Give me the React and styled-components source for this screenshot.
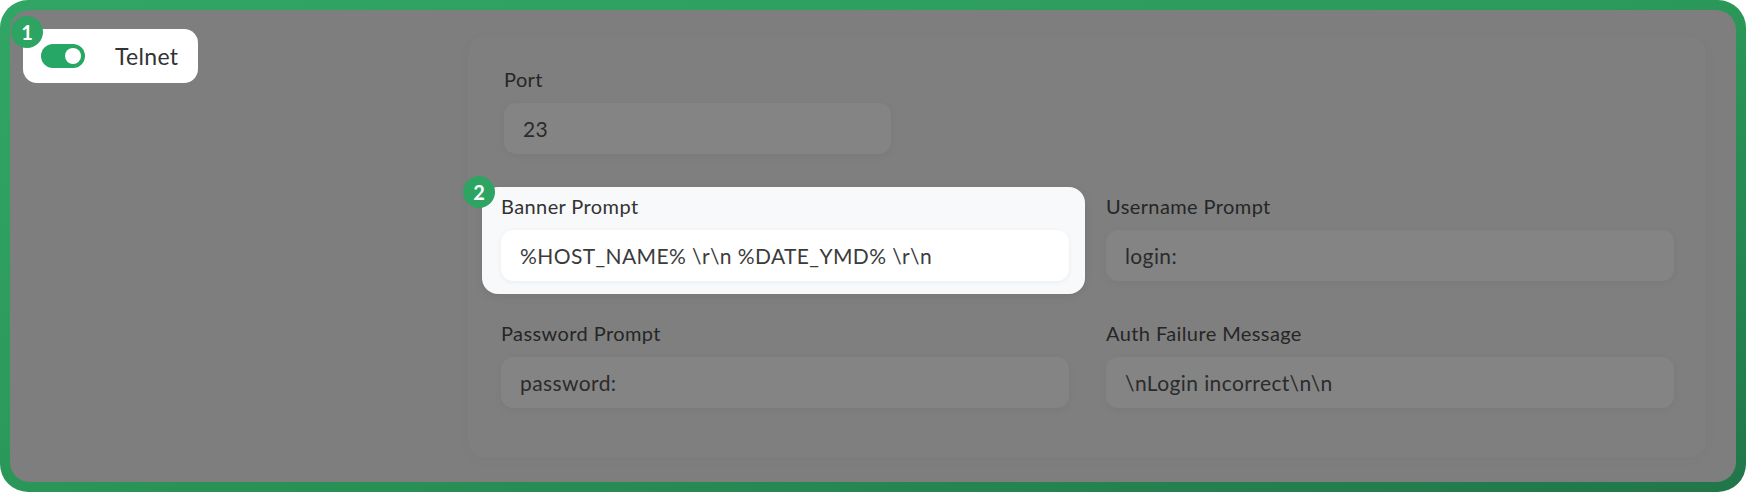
import React from 'react';
import styled, { createGlobalStyle } from 'styled-components';

const GlobalStyle = createGlobalStyle`
  html, body {
    margin: 0;
    padding: 0;
    background: #ffffff;
  }
  body {
    font-family: Lato, "Open Sans", "Liberation Sans", sans-serif;
  }
`;

const fields = [
  { label: 'Port', value: '23', half: true },
  { label: 'Banner Prompt', value: '%HOST_NAME% \\r\\n %DATE_YMD% \\r\\n', badge: 2 },
  { label: 'Username Prompt', value: 'login:' },
  { label: 'Password Prompt', value: 'password:' },
  { label: 'Auth Failure Message', value: '\\nLogin incorrect\\n\\n' },
];

const Frame = styled.div`
  width: 1746px;
  height: 492px;
  box-sizing: border-box;
  padding: 10px;
  border-radius: 28px;
  background: linear-gradient(165deg, #31a664 0%, #2b9a5a 45%, #21764a 100%);
`;

const Stage = styled.div`
  height: 100%;
  box-sizing: border-box;
  display: grid;
  grid-template-columns: 445px 1fr;
  padding: 19px 32px 25px 13px;
  border-radius: 20px;
  background: #7e7e7e;
`;

const Sidebar = styled.div`
  display: flex;
  align-items: flex-start;
`;

const Badge = styled.span`
  position: absolute;
  left: ${p => p.$left}px;
  top: ${p => p.$top}px;
  width: 32px;
  height: 32px;
  border-radius: 50%;
  background: #2ea462;
  color: #fff;
  font-size: 20px;
  font-weight: 700;
  display: flex;
  align-items: center;
  justify-content: center;
  z-index: 2;
`;

const TogglePill = styled.div`
  position: relative;
  display: flex;
  align-items: center;
  gap: 30px;
  width: 175px;
  height: 54px;
  box-sizing: border-box;
  padding: 0 18px;
  border-radius: 14px;
  background: #ffffff;
`;

const Switch = styled.span`
  position: relative;
  width: 44px;
  height: 24px;
  border-radius: 12px;
  background: ${p => (p.$on ? '#27a765' : '#cfd4d9')};
  flex-shrink: 0;
  &::after {
    content: '';
    position: absolute;
    top: 4px;
    left: ${p => (p.$on ? '24px' : '4px')};
    width: 16px;
    height: 16px;
    border-radius: 50%;
    background: #fff;
  }
`;

const ToggleLabel = styled.span`
  font-size: 23px;
  color: #333;
  letter-spacing: 0.3px;
`;

const Panel = styled.div`
  margin-top: 8px;
  box-sizing: border-box;
  padding: 30px 32px 40px 33px;
  border-radius: 16px;
  background: #7f7f7f;
  box-shadow: 0 2px 14px rgba(0, 0, 0, 0.03);
`;

const FieldGrid = styled.div`
  display: grid;
  grid-template-columns: 568px 568px;
  column-gap: 37px;
  row-gap: 40px;
`;

const Field = styled.div`
  position: relative;
  display: flex;
  flex-direction: column;
  gap: 12px;
  ${p => p.$highlight && `
    margin: -7px -16px -13px -19px;
    padding: 7px 16px 13px 19px;
    border-radius: 16px;
    background: #f8f9fa;
    box-shadow: 0 2px 10px rgba(0, 0, 0, 0.08);
    z-index: 1;
  `}
`;

const FullRow = styled.div`
  grid-column: 1 / -1;
  padding-left: 3px;
`;

const Label = styled.label`
  font-size: 20px;
  line-height: 24px;
  letter-spacing: 0.4px;
  color: ${p => (p.$highlight ? '#333' : '#262626')};
`;

const Input = styled.div`
  height: 51px;
  width: ${p => (p.$half ? '387px' : 'auto')};
  box-sizing: border-box;
  display: flex;
  align-items: center;
  padding: 0 19px;
  border-radius: 12px;
  font-size: 21px;
  letter-spacing: 0.4px;
  color: ${p => (p.$highlight ? '#3b3b3b' : '#2b2b2b')};
  background: ${p => (p.$highlight ? '#ffffff' : '#848484')};
  box-shadow: ${p => (p.$highlight ? '0 1px 5px rgba(0,0,0,0.06)' : '0 2px 8px rgba(0,0,0,0.05)')};
`;

const FormField = ({ label, value, badge, half }) => {
  const hl = Boolean(badge);
  return (
    <Field $highlight={hl}>
      {badge && <Badge $left={-19} $top={-11}>{badge}</Badge>}
      <Label $highlight={hl}>{label}</Label>
      <Input $highlight={hl} $half={half}>{value}</Input>
    </Field>
  );
};

export default function App() {
  const [port, ...rest] = fields;
  return (
    <>
      <GlobalStyle />
      <Frame>
        <Stage>
          <Sidebar>
            <TogglePill>
              <Badge $left={-12} $top={-13}>1</Badge>
              <Switch $on />
              <ToggleLabel>Telnet</ToggleLabel>
            </TogglePill>
          </Sidebar>
          <Panel>
            <FieldGrid>
              <FullRow>
                <FormField {...port} />
              </FullRow>
              {rest.map(f => (
                <FormField key={f.label} {...f} />
              ))}
            </FieldGrid>
          </Panel>
        </Stage>
      </Frame>
    </>
  );
}
